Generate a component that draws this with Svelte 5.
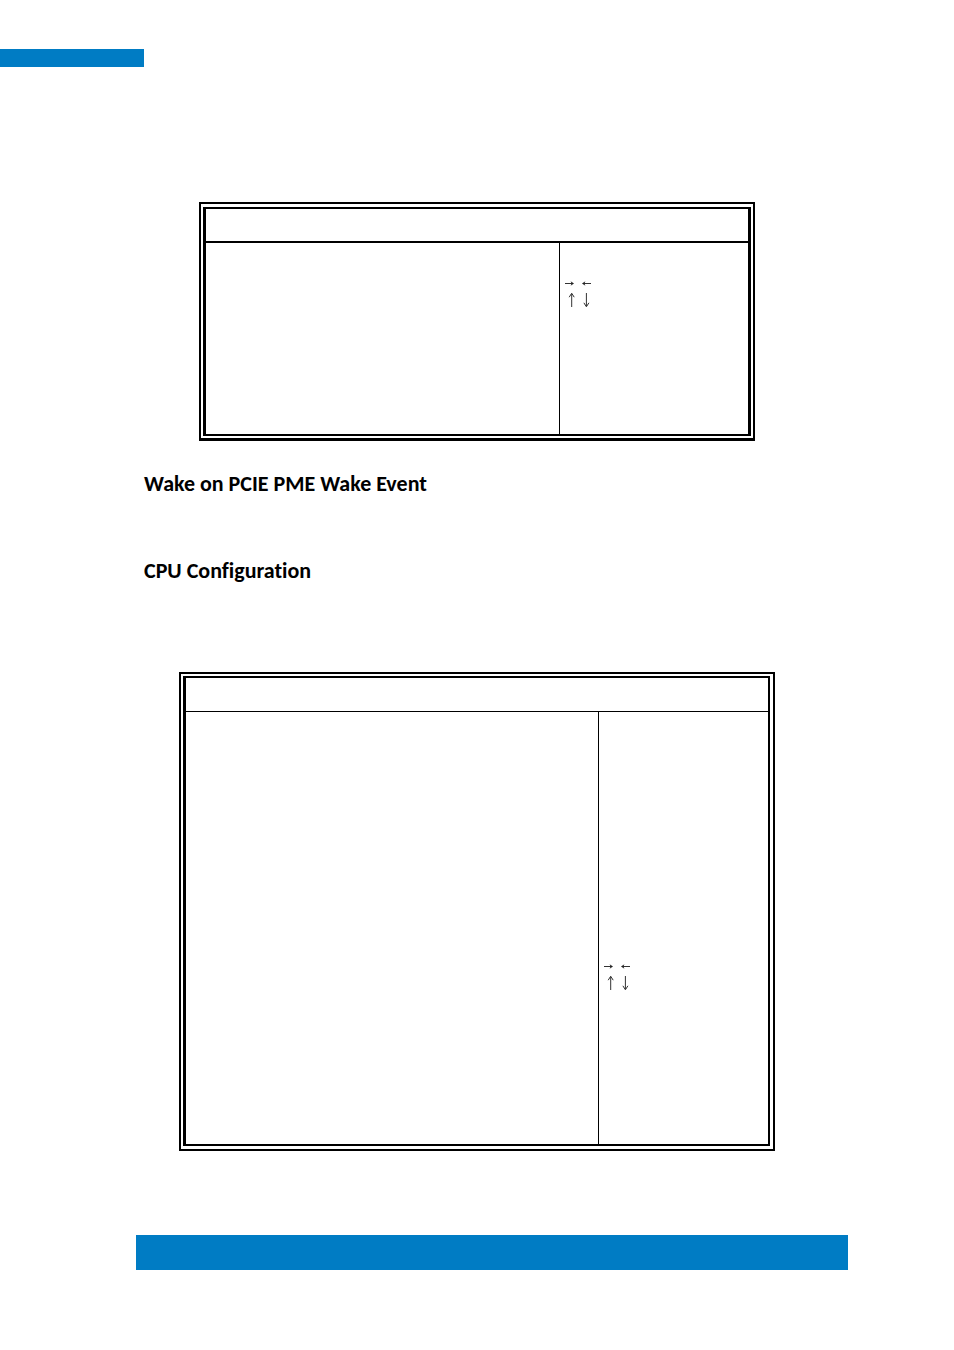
<script lang="ts">
  const screens = [
    { id: 'wake', heading: 'Wake on PCIE PME Wake Event' },
    { id: 'cpu', heading: 'CPU Configuration' }
  ]
</script>

{#snippet arrows()}
  <svg class="arrows" viewBox="0 0 30 28" role="img" aria-label="→ ← ↑ ↓">
    <path class="line" d="M1 3.5h8M19 3.5h8M7.7 14v13M22.4 13v13" />
    <path class="tip" d="M10 3.5L6.6 1.2l1 2.3-1 2.3zM18 3.5l3.4-2.3-1 2.3 1 2.3z" />
    <path class="head" d="M5.2 17.2l2.5-4 2.5 4M19.9 22.8l2.5 4 2.5-4" />
  </svg>
{/snippet}

{#snippet screen(id: string)}
  <div class="screen {id}">
    <div class="frame">
      <div class="title"></div>
      <div class="body">
        <div class="options"></div>
        <div class="help">{@render arrows()}</div>
      </div>
    </div>
  </div>
{/snippet}

<div class="page">
  <header></header>
  <main>
    {@render screen(screens[0].id)}
    {#each screens as s (s.id)}
      <h2>{s.heading}</h2>
    {/each}
    {@render screen(screens[1].id)}
  </main>
  <footer></footer>
</div>

<style>
  :global(body) { margin: 0; background: #fff; }
  .page {
    padding: 49px 0 80px;
    font-family: Calibri, Carlito, Lato, sans-serif;
    color: #000;
  }
  header {
    width: 144px;
    height: 18px;
    background: #007cc4;
  }
  main { padding-top: 135px; }
  h2 {
    margin: 0 144px 59px;
    font-size: 22px;
    line-height: 28px;
    font-weight: 700;
    font-variant-ligatures: none;
  }
  .screen { border: 2px solid #000; }
  .frame { border: 2px solid #000; border-left-width: 3px; }
  .title { height: 33px; border-bottom: 1px solid #000; }
  .body { display: grid; }
  .help { border-left: 1px solid #000; padding-left: 4px; }

  .wake {
    margin: 0 199px 29px;
    padding: 3px 2px 2px;
    border-bottom-width: 3px;
  }
  .wake .frame { border-right-width: 3px; }
  .wake .title { height: 32px; border-bottom-width: 2px; }
  .wake .body { min-height: 191px; grid-template-columns: 353fr 189fr; }
  .wake .help { padding-top: 37px; }

  .cpu {
    margin: 0 179px 84px;
    padding: 2px 3px 3px 2px;
  }
  .cpu .body { min-height: 432px; grid-template-columns: 412fr 170fr; }
  .cpu .help { padding-top: 251px; }

  h2 + .cpu { margin-top: 87px; }

  .arrows { display: block; width: 30px; height: 28px; }
  .line, .head { fill: none; stroke: #333; stroke-width: 1; }
  .tip { fill: #222; }

  footer {
    height: 35px;
    margin: 0 106px 0 136px;
    background: #007cc4;
  }
</style>
